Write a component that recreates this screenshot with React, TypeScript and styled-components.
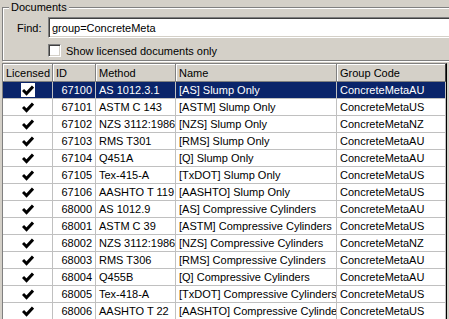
import styled, { createGlobalStyle } from "styled-components";

const GlobalStyle = createGlobalStyle`
  html, body {
    margin: 0;
    padding: 0;
    background: #d4d0c8;
    overflow: hidden;
  }
  body {
    font-family: "Liberation Sans", Arial, sans-serif;
    font-size: 11px;
    color: #000;
  }
`;

const Window = styled.div`
  width: 449px;
  height: 319px;
  overflow: hidden;
  background: #d4d0c8;
`;

const GroupBox = styled.div`
  position: relative;
  width: 480px;
  margin: 7px 0 0 2px;
  padding: 9px 0 3px 14px;
  border: 1px solid #808080;
  box-shadow: inset 1px 1px 0 #fff, 1px 1px 0 #fff;
  box-sizing: border-box;
  display: flex;
  flex-direction: column;
  gap: 6px;
`;

// legend sits over the frame line
const Legend = styled.span`
  position: absolute;
  top: -7px;
  left: 6px;
  padding: 0 2px;
  line-height: 13px;
  background: #d4d0c8;
`;

const FindRow = styled.div`
  display: flex;
  align-items: center;
`;

const FindLabel = styled.label`
  width: 31px;
`;

const TextBox = styled.div`
  flex: 1;
  height: 21px;
  box-sizing: border-box;
  background: #fff;
  border-top: 1px solid #808080;
  border-left: 1px solid #808080;
  border-bottom: 1px solid #fff;
  box-shadow: inset 1px 1px 0 #404040, inset 0 -1px 0 #d4d0c8;
  padding: 4px 0 0 3px;
  line-height: 13px;
`;

const CheckRow = styled.label`
  display: flex;
  align-items: center;
  gap: 5px;
  margin-left: 31px;
  height: 13px;
`;

const Box = styled.span`
  width: 13px;
  height: 13px;
  box-sizing: border-box;
  background: #fff;
  border-top: 1px solid #808080;
  border-left: 1px solid #808080;
  border-right: 1px solid #fff;
  border-bottom: 1px solid #fff;
  box-shadow: inset 1px 1px 0 #404040, inset -1px -1px 0 #d4d0c8;
`;

const Grid = styled.div`
  margin: 2px 0 0 2px;
  width: 445px;
  border-left: 1px solid #808080;
  border-top: 1px solid #808080;
  border-right: 1px solid #000;
  box-sizing: border-box;
  display: grid;
  grid-template-columns: 50px 43px 80px 161px 109px;
  grid-auto-rows: 17px;
  grid-template-rows: 18px;
  background: #fff;
`;

const HeadCell = styled.div<{ $active?: boolean }>`
  background: #d4d0c8;
  box-sizing: border-box;
  border-right: 1px solid ${(p) => (p.$active ? "#404040" : "#808080")};
  border-bottom: 1px solid #808080;
  box-shadow: inset 1px 1px 0 #fff;
  padding: 0 0 0 3px;
  display: flex;
  align-items: center;
  white-space: nowrap;
  overflow: hidden;
`;

const Cell = styled.div<{ $sel?: boolean; $right?: boolean; $center?: boolean }>`
  box-sizing: border-box;
  border-right: 1px solid #c0c0c0;
  border-bottom: 1px solid #c0c0c0;
  background: ${(p) => (p.$sel ? "#0a246a" : "#fff")};
  color: ${(p) => (p.$sel ? "#fff" : "#000")};
  display: flex;
  align-items: center;
  justify-content: ${(p) => (p.$center ? "center" : p.$right ? "flex-end" : "flex-start")};
  padding: ${(p) => (p.$right ? "0 3px 0 0" : p.$center ? "0" : "0 0 0 3px")};
  white-space: nowrap;
  overflow: hidden;
`;

const CheckBg = styled.span`
  width: 14px;
  height: 14px;
  background: #fff;
  display: flex;
  align-items: center;
  justify-content: center;
  margin-left: 1px;
`;

const Check = () => (
  <CheckBg>
    <svg width="12" height="11" viewBox="0 0 12 11">
      <polyline points="1,5 4.5,8.5 11,1.5" fill="none" stroke="#000" strokeWidth="3" />
    </svg>
  </CheckBg>
);

const rows = [
  ["67100", "AS 1012.3.1", "[AS] Slump Only", "ConcreteMetaAU"],
  ["67101", "ASTM C 143", "[ASTM] Slump Only", "ConcreteMetaUS"],
  ["67102", "NZS 3112:1986", "[NZS] Slump Only", "ConcreteMetaNZ"],
  ["67103", "RMS T301", "[RMS] Slump Only", "ConcreteMetaAU"],
  ["67104", "Q451A", "[Q] Slump Only", "ConcreteMetaAU"],
  ["67105", "Tex-415-A", "[TxDOT] Slump Only", "ConcreteMetaUS"],
  ["67106", "AASHTO T 119", "[AASHTO] Slump Only", "ConcreteMetaUS"],
  ["68000", "AS 1012.9", "[AS] Compressive Cylinders", "ConcreteMetaAU"],
  ["68001", "ASTM C 39", "[ASTM] Compressive Cylinders", "ConcreteMetaUS"],
  ["68002", "NZS 3112:1986", "[NZS] Compressive Cylinders", "ConcreteMetaNZ"],
  ["68003", "RMS T306", "[RMS] Compressive Cylinders", "ConcreteMetaAU"],
  ["68004", "Q455B", "[Q] Compressive Cylinders", "ConcreteMetaAU"],
  ["68005", "Tex-418-A", "[TxDOT] Compressive Cylinders", "ConcreteMetaUS"],
  ["68006", "AASHTO T 22", "[AASHTO] Compressive Cylinders", "ConcreteMetaUS"],
];

const App = () => {
  return (
    <Window>
      <GlobalStyle />
      <GroupBox>
        <Legend>Documents</Legend>
        <FindRow>
          <FindLabel>Find:</FindLabel>
          <TextBox>group=ConcreteMeta</TextBox>
        </FindRow>
        <CheckRow>
          <Box />
          Show licensed documents only
        </CheckRow>
      </GroupBox>

      <Grid>
        <HeadCell>Licensed</HeadCell>
        <HeadCell>ID</HeadCell>
        <HeadCell>Method</HeadCell>
        <HeadCell>Name</HeadCell>
        <HeadCell $active>Group Code</HeadCell>
        {rows.map((r, i) => {
          const sel = i === 0;
          return [
            <Cell key={r[0] + "l"} $sel={sel} $center>
              <Check />
            </Cell>,
            <Cell key={r[0] + "i"} $sel={sel} $right>{r[0]}</Cell>,
            <Cell key={r[0] + "m"} $sel={sel}>{r[1]}</Cell>,
            <Cell key={r[0] + "n"} $sel={sel}>{r[2]}</Cell>,
            <Cell key={r[0] + "g"} $sel={sel}>{r[3]}</Cell>,
          ];
        })}
      </Grid>
    </Window>
  );
};

export default App;
